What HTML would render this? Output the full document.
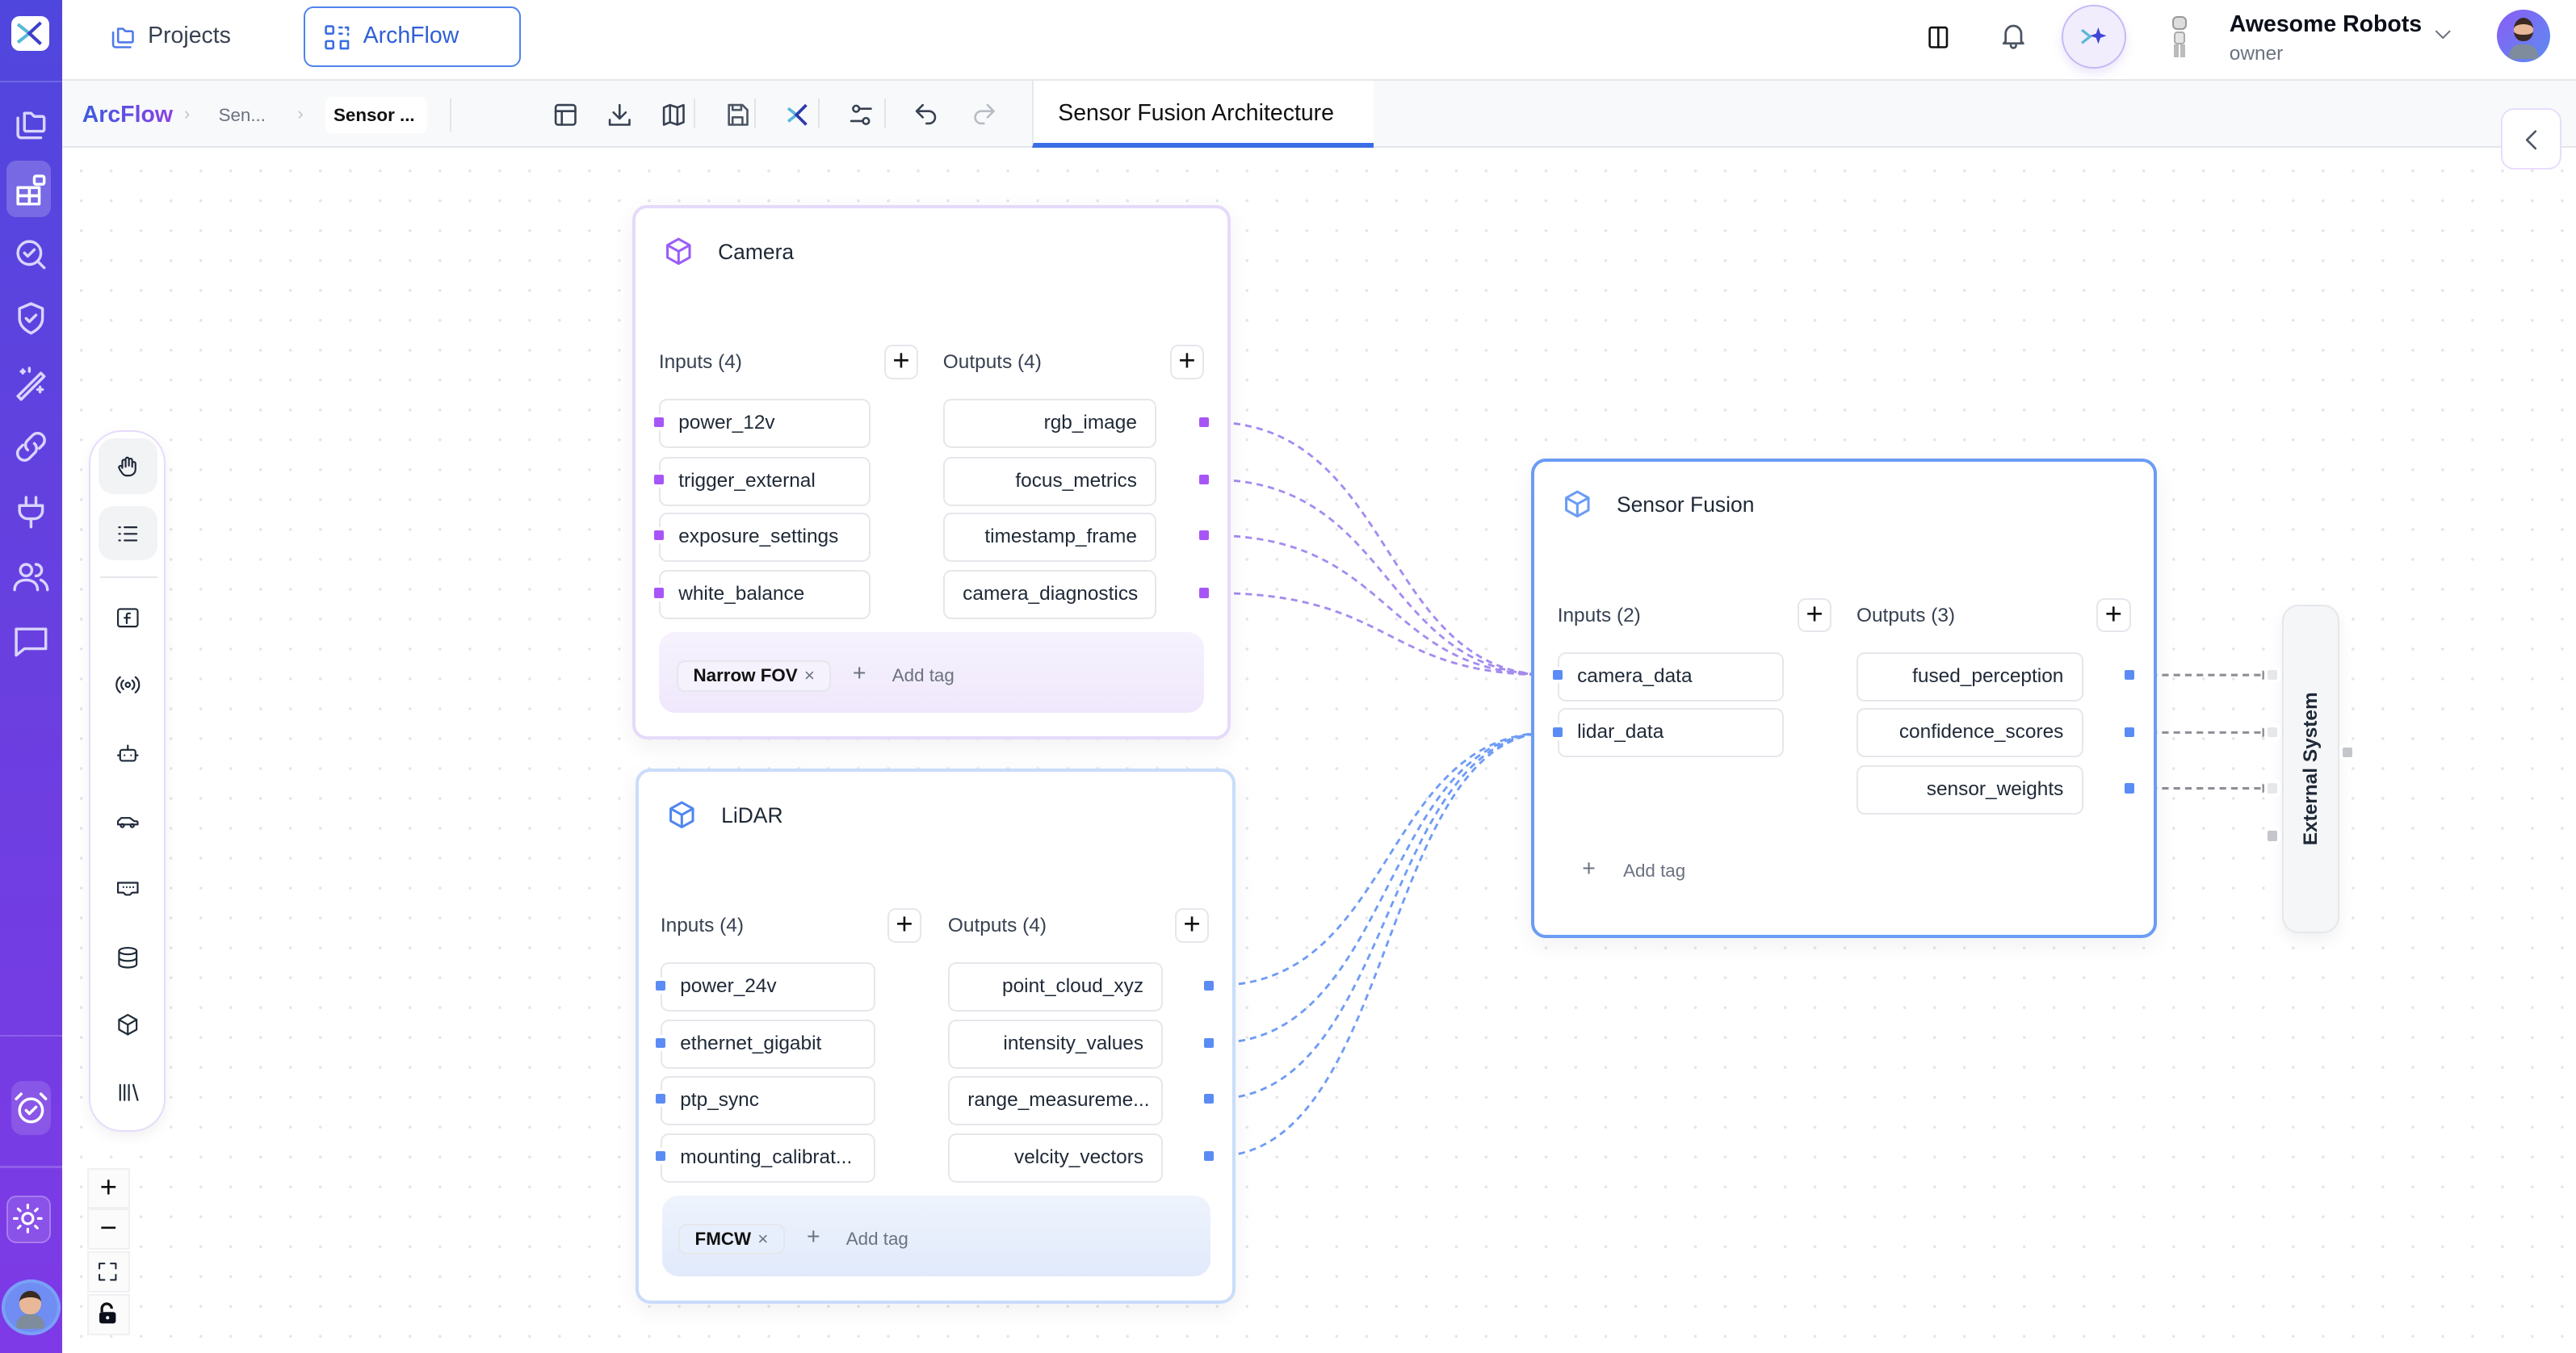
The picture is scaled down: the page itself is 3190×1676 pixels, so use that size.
<!DOCTYPE html>
<html><head><meta charset="utf-8">
<style>
*{box-sizing:border-box;margin:0;padding:0}
html,body{width:3190px;height:1676px;overflow:hidden;background:#fff}
#root{position:absolute;left:0;top:0;width:1568px;height:824px;zoom:2.0345;font-family:"Liberation Sans",sans-serif;color:#1f2937;overflow:hidden;
background-color:#fff;background-image:radial-gradient(circle,#e3e5ea 0.8px,transparent 1px);background-size:18.2px 18.2px;background-position:4px 4px}
.a{position:absolute}
.side{left:0;top:0;width:38px;height:824px;background:linear-gradient(180deg,#4f46dd 0%,#6a3fe0 50%,#7e3ae6 100%)}
.si{position:absolute;left:7px;width:24px;height:24px;stroke:#d9d4ff;fill:none;stroke-width:1.7;stroke-linecap:round;stroke-linejoin:round}
.top{left:38px;top:0;width:1530px;height:49px;background:#fff;border-bottom:1px solid #e5e7eb}
.bar2{left:38px;top:49px;width:1530px;height:41px;background:#f8f9fb;border-bottom:1px solid #e5e7eb}
.ti{position:absolute;width:18px;height:18px;stroke:#374151;fill:none;stroke-width:1.7;stroke-linecap:round;stroke-linejoin:round}
.node{position:absolute;background:#fff;border-radius:9px;box-shadow:0 4px 14px rgba(0,0,0,.06)}
.row{position:absolute;height:30px;border:1px solid #e5e7eb;border-radius:5px;background:#fff;font-size:12px;line-height:28px;padding:0 11px;color:#1f2937;white-space:nowrap}
.r{text-align:right}
.lbl{position:absolute;font-size:12px;color:#374151}
.plus{position:absolute;width:21px;height:21px;border:1px solid #e5e7eb;border-radius:5px;background:#fff;font-size:18px;line-height:18px;text-align:center;color:#111}
.port{position:absolute;width:6px;height:6px;border-radius:1px;box-shadow:0 0 0 2px #fff}
.pp{background:#a855f7}.pb{background:#5b8cf5}.pg{background:#c4c6cc}.pl{background:#e5e7eb}
.chip{position:absolute;height:19px;border:1px solid #e5e7eb;border-radius:5px;font-size:11px;font-weight:bold;line-height:17px;padding:0 9px;color:#111}
.chip span{font-weight:normal;color:#6b7280;margin-left:4px}
.addt{position:absolute;font-size:11px;color:#6b7280}
.pi{position:absolute;width:16px;height:16px;stroke:#1f2937;fill:none;stroke-width:1.6;stroke-linecap:round;stroke-linejoin:round}
.zb{position:absolute;left:53px;width:26px;height:25px;background:#fbfbfc;border:1px solid #f0f0f2;font-size:18px;line-height:22px;text-align:center;color:#111}
</style></head><body><div id="root">

<!-- sidebar -->
<div class="a side">
 <div class="a" style="left:7px;top:10px;width:23px;height:21px;background:#fff;border-radius:5px"></div>
 <svg class="a" style="left:9px;top:12px" width="19" height="17" viewBox="0 0 19 17"><path d="M2 3l7 5.5-7 5.5" stroke="#5ab8d8" stroke-width="2" fill="none"/><path d="M16 2l-7 6.5 7 6.5" stroke="#3b3fc9" stroke-width="2" fill="none"/></svg>
 <div class="a" style="left:0;top:49px;width:38px;height:1px;background:rgba(255,255,255,.18)"></div>
 <svg class="si" style="top:64px" viewBox="0 0 24 24"><path d="M4 8v10a2 2 0 0 0 2 2h12"/><path d="M8 5h4l2 2h5a1 1 0 0 1 1 1v7a1 1 0 0 1-1 1H9a1 1 0 0 1-1-1z"/></svg>
 <div class="a" style="left:4px;top:98px;width:27px;height:34px;background:rgba(255,255,255,.2);border-radius:6px"></div>
 <svg class="si" style="top:104px;stroke:#fff" viewBox="0 0 24 24"><rect x="4" y="10" width="7" height="5"/><rect x="11" y="10" width="6" height="5"/><rect x="4" y="15" width="7" height="5"/><rect x="11" y="15" width="6" height="5"/><rect x="14" y="3" width="6" height="5" rx="1"/></svg>
 <svg class="si" style="top:143px" viewBox="0 0 24 24"><circle cx="11" cy="11" r="7"/><path d="M8 11l2 2 4-4M16 16l4 4"/></svg>
 <svg class="si" style="top:182px" viewBox="0 0 24 24"><path d="M12 3l7 3v6c0 4-3 7-7 9-4-2-7-5-7-9V6z"/><path d="M9 12l2 2 4-4"/></svg>
 <svg class="si" style="top:221px" viewBox="0 0 24 24"><path d="M4 20L18 6l2 2L6 22zM6 5h2M7 4v2M16 16h3M17.5 14.5v3M11 3v2"/></svg>
 <svg class="si" style="top:260px" viewBox="0 0 24 24"><path d="M10 14a4 4 0 0 1 0-6l3-3a4 4 0 0 1 6 6l-2 2"/><path d="M14 10a4 4 0 0 1 0 6l-3 3a4 4 0 0 1-6-6l2-2"/></svg>
 <svg class="si" style="top:300px" viewBox="0 0 24 24"><path d="M9 3v5M15 3v5M5 8h14v3a5 5 0 0 1-5 5h-4a5 5 0 0 1-5-5zM12 16v5"/></svg>
 <svg class="si" style="top:339px" viewBox="0 0 24 24"><circle cx="9" cy="8" r="3.5"/><path d="M2 20c0-4 3-6 7-6s7 2 7 6M15 4.5a3.5 3.5 0 0 1 0 7M18 14c2 1 4 3 4 6"/></svg>
 <svg class="si" style="top:378px" viewBox="0 0 24 24"><path d="M3 5h18v12H8l-5 4z"/></svg>
 <div class="a" style="left:0;top:630px;width:38px;height:1px;background:rgba(255,255,255,.18)"></div>
 <div class="a" style="left:7px;top:658px;width:24px;height:33px;background:rgba(255,255,255,.14);border-radius:7px"></div>
 <svg class="si" style="top:663px;stroke:#fff" viewBox="0 0 24 24"><circle cx="12" cy="13" r="7"/><path d="M9 13l2 2 4-4M3 6l3-3M21 6l-3-3"/></svg>
 <div class="a" style="left:0;top:710px;width:38px;height:1px;background:rgba(255,255,255,.18)"></div>
 <div class="a" style="left:4px;top:728px;width:27px;height:29px;background:rgba(255,255,255,.12);border:1px solid rgba(255,255,255,.25);border-radius:6px"></div>
 <svg class="si" style="top:731px;stroke:#fff;width:22px;height:22px;left:6px" viewBox="0 0 24 24"><circle cx="12" cy="12" r="3.5"/><path d="M12 3v2M12 19v2M3 12h2M19 12h2M5.6 5.6l1.4 1.4M17 17l1.4 1.4M5.6 18.4L7 17M17 7l1.4-1.4"/></svg>
 <div class="a" style="left:3px;top:781px;width:32px;height:30px;border-radius:50%;background:#6f8df2;box-shadow:0 0 0 2px #7aa0f7"></div>
 <div class="a" style="left:12px;top:786px;width:13px;height:14px;border-radius:50% 50% 45% 45%;background:#e9b898;border-top:4px solid #3a2a22"></div>
 <div class="a" style="left:10px;top:800px;width:17px;height:9px;border-radius:8px 8px 2px 2px;background:#7e8c9c"></div>
</div>

<!-- top bar -->
<div class="a top">
 <svg class="ti" style="left:28px;top:14px;stroke:#4f7be8" viewBox="0 0 24 24"><path d="M4 8v10a2 2 0 0 0 2 2h12"/><path d="M8 5h4l2 2h5a1 1 0 0 1 1 1v7a1 1 0 0 1-1 1H9a1 1 0 0 1-1-1z"/></svg>
 <div class="a" style="left:52px;top:14px;font-size:14px;color:#374151">Projects</div>
 <div class="a" style="left:147px;top:4px;width:132px;height:37px;border:1.3px solid #4f84ec;border-radius:6px"></div>
 <svg class="ti" style="left:158px;top:14px;stroke:#3a6ee0" viewBox="0 0 24 24"><rect x="3" y="3" width="6" height="6" rx="1"/><rect x="3" y="15" width="6" height="6" rx="1"/><path d="M14 4h2M19 4h2v2M21 9v1M14 9h2M15 15h6v6h-6z"/></svg>
 <div class="a" style="left:183px;top:14px;font-size:14px;color:#2f5fd6">ArchFlow</div>
 <svg class="ti" style="left:1133px;top:14px;stroke:#111" viewBox="0 0 24 24"><rect x="5" y="4" width="14" height="16" rx="1.5"/><path d="M12 4v16"/></svg>
 <svg class="ti" style="left:1178px;top:12px;stroke:#4b5563;width:19px;height:19px" viewBox="0 0 24 24"><path d="M6 17V11a6 6 0 0 1 12 0v6l1.5 1.5h-15zM10 20a2 2 0 0 0 4 0"/></svg>
 <div class="a" style="left:1217px;top:3px;width:39px;height:39px;border-radius:50%;background:#f1edfd;border:1px solid #c6b8f6;box-shadow:0 3px 6px rgba(120,90,220,.15)"></div>
 <svg class="a" style="left:1227px;top:15px" width="20" height="14" viewBox="0 0 20 14"><path d="M2 3l5 4-5 4" stroke="#5ab8d8" stroke-width="1.6" fill="none"/><path d="M12 1.5l1.3 3.7 3.7 1.3-3.7 1.3-1.3 3.7-1.3-3.7-3.7-1.3 3.7-1.3z" fill="#3d46d6"/></svg>
 <div class="a" style="left:1284px;top:10px;width:9px;height:8px;border-radius:3px;background:#ddd;border:1px solid #999"></div>
 <div class="a" style="left:1285px;top:19px;width:7px;height:8px;border-radius:2px;background:#e5e5e5;border:1px solid #aaa"></div>
 <div class="a" style="left:1285px;top:27px;width:3px;height:8px;background:#bbb"></div>
 <div class="a" style="left:1289px;top:27px;width:3px;height:8px;background:#bbb"></div>
 <div class="a" style="left:1319px;top:7px;font-size:14px;font-weight:bold;color:#0b0f19">Awesome Robots</div>
 <div class="a" style="left:1319px;top:26px;font-size:12px;color:#6b7280">owner</div>
 <svg class="ti" style="left:1442px;top:14px;stroke:#6b7280;width:14px;height:14px" viewBox="0 0 24 24"><path d="M5 9l7 7 7-7"/></svg>
 <div class="a" style="left:1482px;top:6px;width:32px;height:32px;border-radius:50%;background:linear-gradient(135deg,#8b5cf6,#5b8def)"></div>
 <div class="a" style="left:1492px;top:11px;width:12px;height:14px;border-radius:50% 50% 45% 45%;background:#e9b898;border-top:4px solid #3a2a22;border-bottom:4px solid #3a2a22"></div>
 <div class="a" style="left:1489px;top:27px;width:18px;height:9px;border-radius:8px 8px 2px 2px;background:#7e8c9c"></div>
</div>

<!-- bar 2 -->
<div class="a bar2">
 <div class="a" style="left:12px;top:13px;font-size:14px;font-weight:bold;background:linear-gradient(90deg,#3b5de0,#8b3fe6);-webkit-background-clip:text;background-clip:text;color:transparent">ArcFlow</div>
 <div class="a" style="left:74px;top:14px;font-size:11px;color:#c0c4cc">›</div>
 <div class="a" style="left:95px;top:15px;font-size:11px;color:#6b7280">Sen...</div>
 <div class="a" style="left:143px;top:14px;font-size:11px;color:#c0c4cc">›</div>
 <div class="a" style="left:160px;top:10px;width:62px;height:22px;background:#fff;border-radius:4px"></div>
 <div class="a" style="left:165px;top:15px;font-size:11px;font-weight:bold;color:#111">Sensor ...</div>
 <div class="a" style="left:236px;top:11px;width:1px;height:20px;background:#e2e4e8"></div>
 <svg class="ti" style="left:297px;top:12px" viewBox="0 0 24 24"><rect x="4" y="4" width="16" height="16" rx="2"/><path d="M4 9h16M9 9v11"/></svg>
 <svg class="ti" style="left:330px;top:12px" viewBox="0 0 24 24"><path d="M12 4v11M7 10l5 5 5-5M4 16v4h16v-4"/></svg>
 <svg class="ti" style="left:363px;top:12px" viewBox="0 0 24 24"><path d="M4 6l5-2 6 2 5-2v14l-5 2-6-2-5 2zM9 4v14M15 6v14"/></svg>
 <div class="a" style="left:384px;top:11px;width:1px;height:18px;background:#e2e4e8"></div>
 <svg class="ti" style="left:402px;top:12px;stroke:#4b5563" viewBox="0 0 24 24"><path d="M5 4h11l4 4v12H5z"/><path d="M8 4v4h7V4M8 20v-6h8v6"/></svg>
 <div class="a" style="left:421px;top:11px;width:1px;height:18px;background:#e2e4e8"></div>
 <svg class="a" style="left:440px;top:13px" width="16" height="16" viewBox="0 0 16 16"><path d="M2 4l5 4-5 4" stroke="#5ab8d8" stroke-width="1.8" fill="none"/><path d="M13 2L7 8l6 6" stroke="#2d3aa8" stroke-width="1.8" fill="none"/></svg>
 <div class="a" style="left:460px;top:11px;width:1px;height:18px;background:#e2e4e8"></div>
 <svg class="ti" style="left:477px;top:12px" viewBox="0 0 24 24"><circle cx="8" cy="7" r="2.5"/><circle cx="16" cy="17" r="2.5"/><path d="M10.5 7H20M4 17h9.5"/></svg>
 <div class="a" style="left:500px;top:11px;width:1px;height:18px;background:#e2e4e8"></div>
 <svg class="ti" style="left:517px;top:12px" viewBox="0 0 24 24"><path d="M9 14L4 9l5-5M4 9h10a5 5 0 0 1 0 10h-2"/></svg>
 <svg class="ti" style="left:552px;top:12px;stroke:#b8bcc4" viewBox="0 0 24 24"><path d="M15 14l5-5-5-5M20 9H10a5 5 0 0 0 0 10h2"/></svg>
 <div class="a" style="left:590px;top:0;width:208px;height:41px;background:#fff;border-left:1px solid #e5e7eb;border-bottom:3px solid #3b6ee6"></div>
 <div class="a" style="left:606px;top:12px;font-size:14px;color:#111">Sensor Fusion Architecture</div>
</div>

<!-- collapse -->
<div class="a" style="left:1522px;top:66px;width:37px;height:37px;background:#fff;border:1px solid #e9ddfb;border-radius:8px"></div>
<svg class="ti" style="left:1532px;top:76px;stroke:#4b5563" viewBox="0 0 24 24"><path d="M15 5l-7 7 7 7"/></svg>

<!-- edges -->
<svg class="a" style="left:0;top:0" width="1568" height="824">
 <g fill="none" stroke="#a58bf0" stroke-width="1.4" stroke-dasharray="4 3">
  <path d="M737 257 C850 257 840 411 944 411"/>
  <path d="M737 292 C850 292 840 411 944 411"/>
  <path d="M737 326 C850 326 840 411 944 411"/>
  <path d="M737 361 C850 361 840 411 944 411"/>
 </g>
 <g fill="none" stroke="#6f9cf5" stroke-width="1.4" stroke-dasharray="4 3">
  <path d="M740 600 C850 600 840 446 944 446"/>
  <path d="M740 635 C850 635 840 446 944 446"/>
  <path d="M740 669 C850 669 840 446 944 446"/>
  <path d="M740 704 C850 704 840 446 944 446"/>
 </g>
 <path d="M940 408l6 3-6 3z" fill="#8a5ce6"/>
 <path d="M940 443l6 3-6 3z" fill="#3b78f0"/>
 <g fill="none" stroke="#8e8e96" stroke-width="1.5" stroke-dasharray="4 3">
  <path d="M1302 411H1377M1302 446H1377M1302 480H1377"/>
 </g>
 <path d="M1377 408l5 3-5 3zM1377 443l5 3-5 3zM1377 477l5 3-5 3z" fill="#8e8e96"/>
</svg>

<!-- Camera node -->
<div class="node" style="left:385px;top:125px;width:364px;height:325px;border:2px solid #e6dafb"></div>
<svg class="a" style="left:404px;top:144px" width="18" height="18" viewBox="0 0 24 24" fill="none" stroke="#9b5cf6" stroke-width="2" stroke-linejoin="round"><path d="M12 2l9 5v10l-9 5-9-5V7z"/><path d="M3 7l9 5 9-5M12 12v10"/></svg>
<div class="a" style="left:437px;top:146px;font-size:13px;color:#1f2937">Camera</div>
<div class="lbl" style="left:401px;top:214px">Inputs (4)</div>
<div class="plus" style="left:538px;top:210px">+</div>
<div class="lbl" style="left:574px;top:214px">Outputs (4)</div>
<div class="plus" style="left:712px;top:210px">+</div>
<div class="row" style="left:401px;top:243px;width:129px">power_12v</div>
<div class="row" style="left:401px;top:278px;width:129px">trigger_external</div>
<div class="row" style="left:401px;top:312px;width:129px">exposure_settings</div>
<div class="row" style="left:401px;top:347px;width:129px">white_balance</div>
<div class="row r" style="left:574px;top:243px;width:130px">rgb_image</div>
<div class="row r" style="left:574px;top:278px;width:130px">focus_metrics</div>
<div class="row r" style="left:574px;top:312px;width:130px">timestamp_frame</div>
<div class="row r" style="left:574px;top:347px;width:130px">camera_diagnostics</div>
<div class="port pp" style="left:398px;top:254px"></div>
<div class="port pp" style="left:398px;top:289px"></div>
<div class="port pp" style="left:398px;top:323px"></div>
<div class="port pp" style="left:398px;top:358px"></div>
<div class="port pp" style="left:730px;top:254px"></div>
<div class="port pp" style="left:730px;top:289px"></div>
<div class="port pp" style="left:730px;top:323px"></div>
<div class="port pp" style="left:730px;top:358px"></div>
<div class="a" style="left:401px;top:385px;width:332px;height:49px;border-radius:10px;background:linear-gradient(180deg,#f6f2fd,#efe8fc)"></div>
<div class="chip" style="left:412px;top:402px;background:#f5f1fd">Narrow FOV<span>×</span></div>
<div class="addt" style="left:519px;top:403px;font-size:14px;line-height:14px">+</div>
<div class="addt" style="left:543px;top:405px">Add tag</div>

<!-- LiDAR node -->
<div class="node" style="left:387px;top:468px;width:365px;height:326px;border:2px solid #c9dcfb"></div>
<svg class="a" style="left:406px;top:487px" width="18" height="18" viewBox="0 0 24 24" fill="none" stroke="#4f86f0" stroke-width="2" stroke-linejoin="round"><path d="M12 2l9 5v10l-9 5-9-5V7z"/><path d="M3 7l9 5 9-5M12 12v10"/></svg>
<div class="a" style="left:439px;top:489px;font-size:13px;color:#1f2937">LiDAR</div>
<div class="lbl" style="left:402px;top:557px">Inputs (4)</div>
<div class="plus" style="left:540px;top:553px">+</div>
<div class="lbl" style="left:577px;top:557px">Outputs (4)</div>
<div class="plus" style="left:715px;top:553px">+</div>
<div class="row" style="left:402px;top:586px;width:131px">power_24v</div>
<div class="row" style="left:402px;top:621px;width:131px">ethernet_gigabit</div>
<div class="row" style="left:402px;top:655px;width:131px">ptp_sync</div>
<div class="row" style="left:402px;top:690px;width:131px">mounting_calibrat...</div>
<div class="row r" style="left:577px;top:586px;width:131px">point_cloud_xyz</div>
<div class="row r" style="left:577px;top:621px;width:131px">intensity_values</div>
<div class="row r" style="left:577px;top:655px;width:131px">range_measureme...</div>
<div class="row r" style="left:577px;top:690px;width:131px">velcity_vectors</div>
<div class="port pb" style="left:399px;top:597px"></div>
<div class="port pb" style="left:399px;top:632px"></div>
<div class="port pb" style="left:399px;top:666px"></div>
<div class="port pb" style="left:399px;top:701px"></div>
<div class="port pb" style="left:733px;top:597px"></div>
<div class="port pb" style="left:733px;top:632px"></div>
<div class="port pb" style="left:733px;top:666px"></div>
<div class="port pb" style="left:733px;top:701px"></div>
<div class="a" style="left:403px;top:728px;width:334px;height:49px;border-radius:10px;background:linear-gradient(180deg,#eef3fd,#e1eafb)"></div>
<div class="chip" style="left:413px;top:745px;background:#e8effc">FMCW<span>×</span></div>
<div class="addt" style="left:491px;top:746px;font-size:14px;line-height:14px">+</div>
<div class="addt" style="left:515px;top:748px">Add tag</div>

<!-- Sensor Fusion node -->
<div class="node" style="left:932px;top:279px;width:381px;height:292px;border:2px solid #6b9cf5"></div>
<svg class="a" style="left:951px;top:298px" width="18" height="18" viewBox="0 0 24 24" fill="none" stroke="#6b9cf5" stroke-width="2" stroke-linejoin="round"><path d="M12 2l9 5v10l-9 5-9-5V7z"/><path d="M3 7l9 5 9-5M12 12v10"/></svg>
<div class="a" style="left:984px;top:300px;font-size:13px;color:#1f2937">Sensor Fusion</div>
<div class="lbl" style="left:948px;top:368px">Inputs (2)</div>
<div class="plus" style="left:1094px;top:364px">+</div>
<div class="lbl" style="left:1130px;top:368px">Outputs (3)</div>
<div class="plus" style="left:1276px;top:364px">+</div>
<div class="row" style="left:948px;top:397px;width:138px">camera_data</div>
<div class="row" style="left:948px;top:431px;width:138px">lidar_data</div>
<div class="row r" style="left:1130px;top:397px;width:138px">fused_perception</div>
<div class="row r" style="left:1130px;top:431px;width:138px">confidence_scores</div>
<div class="row r" style="left:1130px;top:466px;width:138px">sensor_weights</div>
<div class="port pb" style="left:945px;top:408px"></div>
<div class="port pb" style="left:945px;top:443px"></div>
<div class="port pb" style="left:1293px;top:408px"></div>
<div class="port pb" style="left:1293px;top:443px"></div>
<div class="port pb" style="left:1293px;top:477px"></div>
<div class="addt" style="left:963px;top:522px;font-size:14px;line-height:14px">+</div>
<div class="addt" style="left:988px;top:524px">Add tag</div>

<!-- External System -->
<div class="a" style="left:1389px;top:368px;width:35px;height:200px;background:#f5f6f8;border:1px solid #e5e7eb;border-radius:10px;box-shadow:0 4px 10px rgba(0,0,0,.06)"></div>
<div class="a" style="left:1347px;top:459px;width:120px;height:18px;transform:rotate(-90deg);font-size:12px;font-weight:bold;color:#1f2937;text-align:center;line-height:18px">External System</div>
<div class="port pl" style="left:1380px;top:408px"></div>
<div class="port pl" style="left:1380px;top:443px"></div>
<div class="port pl" style="left:1380px;top:477px"></div>
<div class="port pg" style="left:1380px;top:506px"></div>
<div class="port pg" style="left:1426px;top:455px"></div>

<!-- tool palette -->
<div class="a" style="left:54px;top:262px;width:47px;height:427px;background:#fff;border:1px solid #e6dcfb;border-radius:20px;box-shadow:0 3px 8px rgba(0,0,0,.06)"></div>
<div class="a" style="left:60px;top:267px;width:36px;height:34px;background:#f2f3f5;border-radius:9px"></div>
<div class="a" style="left:60px;top:308px;width:36px;height:33px;background:#f2f3f5;border-radius:9px"></div>
<div class="a" style="left:61px;top:351px;width:35px;height:1px;background:#e5e7eb"></div>
<svg class="pi" style="left:70px;top:276px" viewBox="0 0 24 24"><path d="M7 13V7a1.5 1.5 0 0 1 3 0v5M10 11V5a1.5 1.5 0 0 1 3 0v6M13 11V6a1.5 1.5 0 0 1 3 0v6M16 12V9a1.5 1.5 0 0 1 3 0v5c0 4-3 6-6 6h-2c-3 0-4-2-6-5l-1-2a1.5 1.5 0 0 1 2.5-1.5L7 13"/></svg>
<svg class="pi" style="left:70px;top:317px" viewBox="0 0 24 24"><path d="M9 6h11M9 12h11M9 18h11M4 6h1M4 12h1M4 18h1"/></svg>
<svg class="pi" style="left:70px;top:368px" viewBox="0 0 24 24"><rect x="3" y="4" width="18" height="16" rx="2"/><path d="M14 8h-1.5a1.5 1.5 0 0 0-1.5 1.5V17M9 12h5"/></svg>
<svg class="pi" style="left:70px;top:409px" viewBox="0 0 24 24"><circle cx="12" cy="12" r="2"/><path d="M8 8a5 5 0 0 0 0 8M16 8a5 5 0 0 1 0 8M5 5a9 9 0 0 0 0 14M19 5a9 9 0 0 1 0 14"/></svg>
<svg class="pi" style="left:70px;top:451px" viewBox="0 0 24 24"><rect x="5" y="8" width="14" height="10" rx="2"/><path d="M12 4v4M3 13h2M19 13h2M9 13h.01M15 13h.01"/></svg>
<svg class="pi" style="left:70px;top:492px" viewBox="0 0 24 24"><path d="M3 15v-3l3-3h8l4 3h2a1 1 0 0 1 1 1v2z"/><circle cx="7" cy="16" r="1.5"/><circle cx="16" cy="16" r="1.5"/></svg>
<svg class="pi" style="left:70px;top:533px" viewBox="0 0 24 24"><path d="M3 7h18v9h-5l-2 2h-4l-2-2H3z"/><path d="M8 11h.01M11 11h.01M14 11h.01M17 11h.01"/></svg>
<svg class="pi" style="left:70px;top:575px" viewBox="0 0 24 24"><ellipse cx="12" cy="6" rx="8" ry="3"/><path d="M4 6v12c0 1.7 3.6 3 8 3s8-1.3 8-3V6M4 12c0 1.7 3.6 3 8 3s8-1.3 8-3"/></svg>
<svg class="pi" style="left:70px;top:616px" viewBox="0 0 24 24"><path d="M12 3l8 4.5v9L12 21l-8-4.5v-9z"/><path d="M4 7.5l8 4.5 8-4.5M12 12v9"/></svg>
<svg class="pi" style="left:70px;top:657px" viewBox="0 0 24 24"><path d="M5 5v14M9 5v14M13 5v14M17 5l4 14"/></svg>

<!-- zoom controls -->
<div class="zb" style="top:711px">+</div>
<div class="zb" style="top:736px">−</div>
<div class="zb" style="top:762px"></div>
<svg class="pi" style="left:58px;top:767px;width:15px;height:15px" viewBox="0 0 24 24"><path d="M4 9V4h5M15 4h5v5M20 15v5h-5M9 20H4v-5"/></svg>
<div class="zb" style="top:788px"></div>
<svg class="a" style="left:59px;top:793px" width="13" height="14" viewBox="0 0 13 14"><path d="M3 6V4a3 3 0 0 1 6 0" stroke="#111" stroke-width="1.6" fill="none"/><rect x="1.5" y="6" width="10" height="7" rx="1.5" fill="#0b0f19"/><circle cx="6.5" cy="9.5" r="1" fill="#fff"/></svg>

</div></body></html>
